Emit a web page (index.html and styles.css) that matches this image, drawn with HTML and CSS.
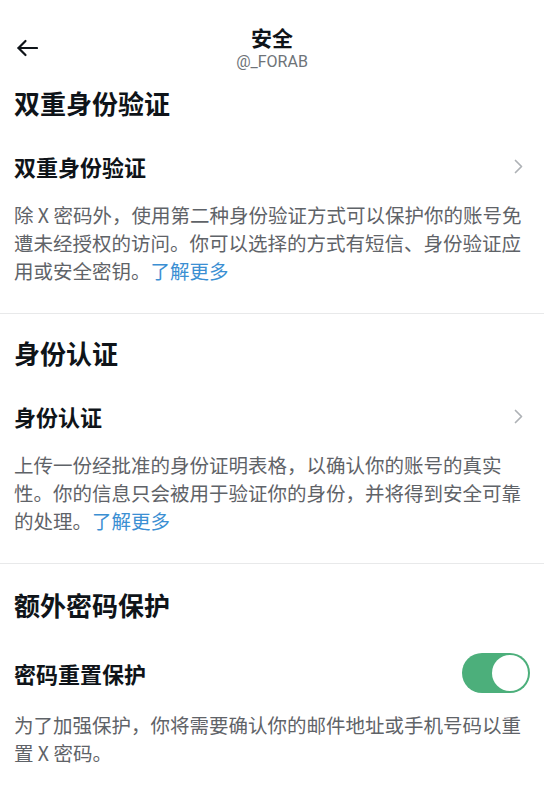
FILE: index.html
```html
<!DOCTYPE html>
<html>
<head>
    <meta charset="utf-8">
    <title>安全</title>
    <link rel="stylesheet" href="styles.css">
</head>
<body>
    <header class="topbar">
        <div class="back">
            <svg width="22" height="18" viewBox="0 0 22 18" fill="none" stroke="#0f1419" stroke-width="2.2" stroke-linecap="round" stroke-linejoin="round">
                <path d="M21 9H2.5"/>
                <path d="M9.5 2L2.5 9l7 7"/>
            </svg>
        </div>
        <div class="title-block">
            <div class="title">安全</div>
            <div class="handle">@_FORAB</div>
        </div>
        <div></div>
    </header>

    <section class="section first">
        <h2 class="section-title">双重身份验证</h2>
        <div class="row">
            <span class="row-label">双重身份验证</span>
            <svg class="chevron" width="9" height="15" viewBox="0 0 9 15" fill="none" stroke="#aeb2b6" stroke-width="1.7" stroke-linecap="round" stroke-linejoin="round">
                <path d="M1.5 1.5l6 6-6 6"/>
            </svg>
        </div>
        <p class="desc">除 X 密码外，使用第二种身份验证方式可以保护你的账号免遭未经授权的访问。你可以选择的方式有短信、身份验证应用或安全密钥。<a class="link">了解更多</a></p>
    </section>

    <section class="section">
        <h2 class="section-title">身份认证</h2>
        <div class="row">
            <span class="row-label">身份认证</span>
            <svg class="chevron" width="9" height="15" viewBox="0 0 9 15" fill="none" stroke="#aeb2b6" stroke-width="1.7" stroke-linecap="round" stroke-linejoin="round">
                <path d="M1.5 1.5l6 6-6 6"/>
            </svg>
        </div>
        <p class="desc">上传一份经批准的身份证明表格，以确认你的账号的真实性。你的信息只会被用于验证你的身份，并将得到安全可靠的处理。<a class="link">了解更多</a></p>
    </section>

    <section class="section last">
        <h2 class="section-title">额外密码保护</h2>
        <div class="row">
            <span class="row-label">密码重置保护</span>
            <span class="toggle"><span class="knob"></span></span>
        </div>
        <p class="desc tight">为了加强保护，你将需要确认你的邮件地址或手机号码以重置 X 密码。</p>
    </section>
</body>
</html>
```

FILE: styles.css
```css
body {
    margin: 0;
    background: #ffffff;
    color: #0f1419;
    font-family: "Noto Sans CJK SC", "Noto Sans", sans-serif;
}

.topbar {
    display: grid;
    grid-template-columns: 40px 1fr 40px;
    align-items: center;
    padding: 24px 14px 0;
}

.back {
    display: flex;
    align-items: center;
    padding-left: 2px;
}

.back svg {
    display: block;
}

.title-block {
    text-align: center;
}

.title {
    font-size: 21px;
    font-weight: 700;
    line-height: 26px;
}

.handle {
    margin-top: 2px;
    font-family: "Roboto", "Liberation Sans", sans-serif;
    font-size: 16px;
    line-height: 20px;
    color: #6e7378;
}

.section {
    padding: 22px 14px 28px;
    border-bottom: 1px solid #e8e9ea;
}

.section.first {
    padding-top: 14px;
}

.section.last {
    padding-top: 24px;
    border-bottom: none;
}

.section-title {
    margin: 0;
    font-size: 26px;
    font-weight: 700;
    line-height: 34px;
}

.row {
    display: flex;
    align-items: center;
    justify-content: space-between;
    min-height: 30px;
    margin-top: 31px;
}

.row-label {
    font-size: 22px;
    font-weight: 700;
    line-height: 30px;
}

.chevron {
    display: block;
    margin-right: 7px;
}

.desc {
    margin: 20px 0 0;
    font-size: 19.5px;
    line-height: 28px;
    color: #5f6368;
}

.desc.tight {
    margin-top: 18px;
}

.link {
    color: #3b8fd3;
}

.toggle {
    display: flex;
    align-items: center;
    justify-content: flex-end;
    box-sizing: border-box;
    width: 68px;
    height: 40px;
    padding: 2px;
    border-radius: 20px;
    background: #4caf7b;
}

.knob {
    width: 36px;
    height: 36px;
    border-radius: 50%;
    background: #ffffff;
}
```
